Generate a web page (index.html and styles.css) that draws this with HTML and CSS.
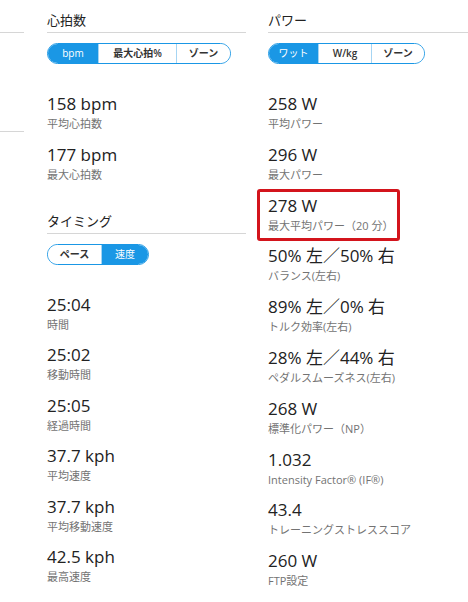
FILE: index.html
```html
<!DOCTYPE html>
<html lang="ja">
<head>
  <meta charset="UTF-8">
  <meta name="viewport" content="width=device-width, initial-scale=1.0">
  <title>アクティビティ統計</title>
  <link rel="stylesheet" href="styles.css">
</head>
<body>

<div class="stats-page">
  <div class="stub">
    <div class="stub-head"></div>
    <div class="stub-row"></div>
  </div>

  <div class="column">
    <div class="section">
      <h2 class="section-title">心拍数</h2>
      <div class="toggle">
        <button class="seg active" style="width: 50px">bpm</button>
        <button class="seg" style="width: 78px">最大心拍%</button>
        <button class="seg" style="width: 54px">ゾーン</button>
      </div>
      <div class="stat-list">
        <div class="stat">
          <div class="value">158 bpm</div>
          <div class="label">平均心拍数</div>
        </div>
        <div class="stat">
          <div class="value">177 bpm</div>
          <div class="label">最大心拍数</div>
        </div>
      </div>
    </div>

    <div class="section section-next">
      <h2 class="section-title">タイミング</h2>
      <div class="toggle">
        <button class="seg" style="width: 53px">ペース</button>
        <button class="seg active" style="width: 47px">速度</button>
      </div>
      <div class="stat-list">
        <div class="stat">
          <div class="value">25:04</div>
          <div class="label">時間</div>
        </div>
        <div class="stat">
          <div class="value">25:02</div>
          <div class="label">移動時間</div>
        </div>
        <div class="stat">
          <div class="value">25:05</div>
          <div class="label">経過時間</div>
        </div>
        <div class="stat">
          <div class="value">37.7 kph</div>
          <div class="label">平均速度</div>
        </div>
        <div class="stat">
          <div class="value">37.7 kph</div>
          <div class="label">平均移動速度</div>
        </div>
        <div class="stat">
          <div class="value">42.5 kph</div>
          <div class="label">最高速度</div>
        </div>
      </div>
    </div>
  </div>

  <div class="column column-wide">
    <div class="section">
      <h2 class="section-title">パワー</h2>
      <div class="toggle">
        <button class="seg active" style="width: 49px">ワット</button>
        <button class="seg" style="width: 53px">W/kg</button>
        <button class="seg" style="width: 53px">ゾーン</button>
      </div>
      <div class="stat-list power-list">
        <div class="stat">
          <div class="value">258 W</div>
          <div class="label">平均パワー</div>
        </div>
        <div class="stat">
          <div class="value">296 W</div>
          <div class="label">最大パワー</div>
        </div>
        <div class="stat marked">
          <div class="value">278 W</div>
          <div class="label">最大平均パワー（20 分）</div>
        </div>
        <div class="stat">
          <div class="value">50% 左／50% 右</div>
          <div class="label">バランス(左右)</div>
        </div>
        <div class="stat">
          <div class="value">89% 左／0% 右</div>
          <div class="label">トルク効率(左右)</div>
        </div>
        <div class="stat">
          <div class="value">28% 左／44% 右</div>
          <div class="label">ペダルスムーズネス(左右)</div>
        </div>
        <div class="stat">
          <div class="value">268 W</div>
          <div class="label">標準化パワー（NP）</div>
        </div>
        <div class="stat">
          <div class="value">1.032</div>
          <div class="label">Intensity Factor® (IF®)</div>
        </div>
        <div class="stat">
          <div class="value">43.4</div>
          <div class="label">トレーニングストレススコア</div>
        </div>
        <div class="stat">
          <div class="value">260 W</div>
          <div class="label">FTP設定</div>
        </div>
      </div>
    </div>
  </div>
</div>

</body>
</html>
```

FILE: styles.css
```css
body {
  margin: 0;
  background-color: #fff;
  font-family: "Open Sans", "Noto Sans CJK JP", sans-serif;
  color: #222;
  overflow: hidden;
}

.stats-page {
  display: flex;
  gap: 22px;
}

.stub {
  width: 24px;
  flex-shrink: 0;
  margin-right: 1px;
}

.stub-head {
  height: 32px;
  border-bottom: 1px solid #d6d6d6;
}

.stub-row {
  height: 98px;
  border-bottom: 1px solid #d6d6d6;
}

.column {
  width: 199px;
  flex-shrink: 0;
}

.column-wide {
  width: auto;
  flex: 1;
  min-width: 0;
}

.section-title {
  margin: 0;
  padding: 11px 0 3px;
  font-size: 13px;
  font-weight: normal;
  line-height: 18px;
  border-bottom: 1px solid #d6d6d6;
}

.section-next {
  margin-top: 18px;
}

.toggle {
  display: inline-flex;
  margin-top: 10px;
  height: 21px;
  box-sizing: border-box;
  border: 1px solid #1a97e5;
  border-radius: 11px;
  overflow: hidden;
}

.seg {
  border: none;
  border-left: 1px solid #a6d5f3;
  background: #fff;
  padding: 0;
  font-family: inherit;
  font-size: 10px;
  font-weight: 600;
  color: #333;
  line-height: 19px;
  text-align: center;
  cursor: pointer;
}

.seg:first-child {
  border-left: none;
}

.seg.active {
  background-color: #1a97e5;
  color: #fff;
  font-weight: normal;
}

.stat-list {
  margin-top: 28px;
}

.stat {
  height: 40px;
  margin-bottom: 10.5px;
}

.power-list .stat {
  margin-bottom: 10.8px;
}

.value {
  font-size: 17px;
  line-height: 24px;
  white-space: nowrap;
}

.label {
  font-size: 11px;
  line-height: 16px;
  color: #737373;
  white-space: nowrap;
}

/* red annotation box drawn over the stat */
.stat.marked {
  position: relative;
}

.stat.marked::after {
  content: '';
  position: absolute;
  left: -11px;
  top: -5px;
  width: 143px;
  height: 52px;
  box-sizing: border-box;
  border: 3px solid #d3141c;
  border-radius: 3px;
}
```
